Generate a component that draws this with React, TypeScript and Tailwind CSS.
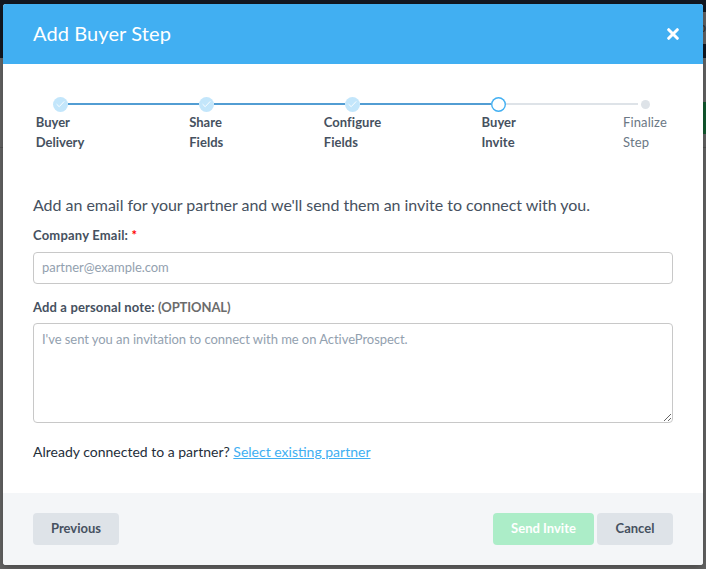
import React from "react";

type StepState = "done" | "current" | "upcoming";

const steps: { lines: [string, string]; state: StepState; tracking: string }[] = [
  { lines: ["Buyer", "Delivery"], state: "done", tracking: "tracking-[0px]" },
  { lines: ["Share", "Fields"], state: "done", tracking: "tracking-[0.05px]" },
  { lines: ["Configure", "Fields"], state: "done", tracking: "tracking-[0.05px]" },
  { lines: ["Buyer", "Invite"], state: "current", tracking: "tracking-[0.05px]" },
  { lines: ["Finalize", "Step"], state: "upcoming", tracking: "tracking-[0.1px]" },
];

function Marker({ state }: { state: StepState }) {
  if (state === "done") {
    return (
      <span className="flex size-[15px] shrink-0 items-center justify-center rounded-full bg-[#c3e6fb]">
        <svg viewBox="0 0 15 15" className="size-[15px]" fill="none" stroke="#fff" strokeWidth="0.9">
          <path d="M3.6 7.2 6.2 9.7 11.2 4.4" />
        </svg>
      </span>
    );
  }
  if (state === "current") {
    return <span className="size-[15px] shrink-0 rounded-full bg-white shadow-[inset_0_0_0_1.4px_#41aff2]" />;
  }
  return <span className="ml-[3px] size-[9px] shrink-0 rounded-full bg-[#dee3e8]" />;
}

function Stepper() {
  return (
    <div>
      <div className="flex h-4 items-center pr-[53.5px] pl-[49.5px]">
        {steps.map((s, i) => (
          <React.Fragment key={i}>
            {i > 0 && (
              <span className={`h-[2px] flex-1 ${s.state === "upcoming" ? "bg-[#dee3e8]" : "bg-[#529dd3]"}`} />
            )}
            <Marker state={s.state} />
          </React.Fragment>
        ))}
      </div>
      <div className="flex justify-between pr-[28.5px] pl-[27.5px]">
        {steps.map((s, i) => (
          <div key={i} className="flex w-[59px] justify-center">
            <div
              className={`text-[13px] leading-5 whitespace-nowrap ${s.tracking} ${
                s.state === "upcoming" ? "text-[#6b7885]" : "font-bold text-[#465160]"
              }`}
            >
              {s.lines[0]}
              <br />
              {s.lines[1]}
            </div>
          </div>
        ))}
      </div>
    </div>
  );
}

export default function App() {
  return (
    <div className="relative h-[569px] w-[706px] overflow-hidden bg-[#666] font-[Lato,'Liberation_Sans',sans-serif]">
      <div className="flex h-[58px] flex-col items-end bg-[#121822] pt-3">
        <div className="flex h-8 w-[6px] items-center justify-end overflow-hidden bg-[#656565] text-[13px] text-[#333]">o</div>
      </div>
      <div className="flex justify-end pt-11">
        <div className="h-8 w-[6px] bg-[#125c30]" />
      </div>
      <div className="mt-[13px] h-px bg-[#555]" />

      <div className="absolute top-1 left-[3px] flex h-[561px] w-[700px] flex-col overflow-hidden rounded-[3px] bg-white shadow-[0_3px_8px_rgba(0,0,0,0.3)]">
        <header className="flex h-[60px] shrink-0 items-center justify-between bg-[#41aff2] pr-6 pl-[30px]">
          <h1 className="pb-0.5 text-[20px] leading-[30px] tracking-[0.1px] text-white">Add Buyer Step</h1>
          <svg viewBox="0 0 12 12" className="size-3" stroke="#fff" strokeWidth="3" strokeLinecap="round">
            <path d="M1.7 1.7 10.3 10.3M10.3 1.7 1.7 10.3" />
          </svg>
        </header>

        <main className="flex-1 pt-[32px]">
          <Stepper />
          <div className="flex flex-col px-[30px] pt-[41px]">
            <p className="text-[16px] leading-6 whitespace-nowrap tracking-[-0.035px] text-[#465160]">
              Add an email for your partner and we'll send them an invite to connect with you.
            </p>
            <label className="mt-2 text-[13px] leading-5 font-bold tracking-[0.2px] text-[#465160]">
              Company Email: <span className="text-[#f00]">*</span>
            </label>
            <input
              className="mt-[7px] h-8 w-full rounded-[4px] border border-[#c8c8c8] px-2 pb-0.5 text-[13px] tracking-[-0.05px] placeholder:text-[#93a1af]"
              placeholder="partner@example.com"
            />
            <label className="mt-[13px] text-[13px] leading-5 font-bold tracking-[0.14px] text-[#465160]">
              Add a personal note: <span className="tracking-[-0.1px] text-[#6b6b6b]">(OPTIONAL)</span>
            </label>
            <textarea
              className="mt-1.5 h-[100px] w-full rounded-[4px] border border-[#c8c8c8] px-2 py-[5px] text-[13px] leading-5 tracking-[-0.05px] placeholder:text-[#93a1af]"
              placeholder="I've sent you an invitation to connect with me on ActiveProspect."
            />
            <p className="mt-[19px] text-[14px] leading-5 whitespace-nowrap text-[#242e3a]">
              Already connected to a partner?{" "}
              <a className="text-[#41aff2] underline">Select existing partner</a>
            </p>
          </div>
        </main>

        <footer className="flex h-[72px] shrink-0 items-center gap-[3px] bg-[#f4f6f8] px-[30px] text-[13px] font-bold">
          <button className="mr-auto h-8 w-[86px] rounded-[4px] bg-[#dee3e8] text-[#465160]">Previous</button>
          <button className="h-8 w-[101px] rounded-[4px] bg-[#acedc8] text-white">Send Invite</button>
          <button className="h-8 w-[76px] rounded-[4px] bg-[#dee3e8] text-[#465160]">Cancel</button>
        </footer>
      </div>
    </div>
  );
}
